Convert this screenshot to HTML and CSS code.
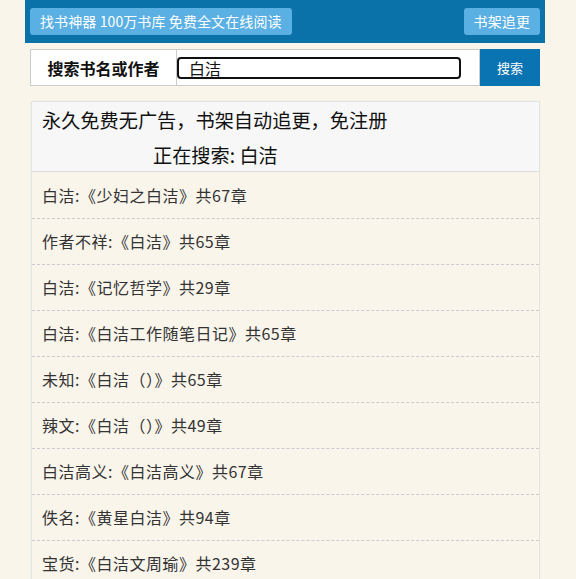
FILE: index.html
```html
<!DOCTYPE html>
<html lang="zh-CN">
  <head>
    <meta charset="UTF-8" />
    <meta name="viewport" content="width=device-width, initial-scale=1.0" />
    <title>白洁 - 找书神器</title>
    <link rel="stylesheet" href="styles.css">
  </head>
  <body>
    <div class="wrap">
      <div class="topbar">
        <a class="top-btn" href="#">找书神器 100万书库 免费全文在线阅读</a>
        <a class="top-btn" href="#">书架追更</a>
      </div>
      <form class="search-row" onsubmit="return false">
        <div class="search-label">搜索书名或作者</div>
        <div class="search-field"><input class="search-input" type="text" value="白洁" /></div>
        <button class="search-btn" type="submit">搜索</button>
      </form>
      <div class="card">
        <div class="card-head">
          <div class="slogan">永久免费无广告，书架自动追更，免注册</div>
          <div class="searching">正在搜索: 白洁</div>
        </div>
        <ul class="result-list" id="results"></ul>
      </div>
    </div>

    <script>
      const results = [
        { author: "白洁", title: "少妇之白洁", chapters: 67 },
        { author: "作者不祥", title: "白洁", chapters: 65 },
        { author: "白洁", title: "记忆哲学", chapters: 29 },
        { author: "白洁", title: "白洁工作随笔日记", chapters: 65 },
        { author: "未知", title: "白洁（）", chapters: 65 },
        { author: "辣文", title: "白洁（）", chapters: 49 },
        { author: "白洁高义", title: "白洁高义", chapters: 67 },
        { author: "佚名", title: "黄星白洁", chapters: 94 },
        { author: "宝货", title: "白洁文周瑜", chapters: 239 },
      ];

      document.getElementById("results").innerHTML = results
        .map(
          (r) => `<li class="result"><a href="#">${r.author}:《${r.title}》共${r.chapters}章</a></li>`
        )
        .join("");
    </script>
  </body>
</html>
```

FILE: styles.css
```css
body {
  font-family: "Noto Sans CJK SC", "Noto Sans", sans-serif;
  background-color: #f9f5eb;
  margin: 0;
  padding: 0;
  color: #333;
}
a {
  text-decoration: none;
}
.wrap {
  width: 520px;
  margin-left: 25px;
}
.topbar {
  background: #0a72a8;
  height: 43px;
  padding: 0 5px;
  display: flex;
  justify-content: space-between;
  align-items: center;
  box-sizing: border-box;
}
.top-btn {
  background: #5aafe3;
  color: white;
  font-size: 14px;
  letter-spacing: 0.1px;
  height: 27px;
  line-height: 27px;
  padding: 0 10px;
  border-radius: 3px;
}
.search-row {
  display: flex;
  margin: 6px 5px 0;
  height: 37px;
}
.search-label {
  width: 147px;
  box-sizing: border-box;
  border: 1px solid #ccc;
  background: white;
  font-size: 16px;
  font-weight: bold;
  color: #111;
  display: flex;
  align-items: center;
  justify-content: center;
}
.search-field {
  flex: 1;
  border: 1px solid #ccc;
  border-left: none;
  background: white;
  display: flex;
  align-items: center;
}
.search-input {
  width: 284px;
  height: 22px;
  box-sizing: border-box;
  border: 2px solid #111;
  border-radius: 4px;
  padding: 0 10px;
  font-family: inherit;
  font-size: 16px;
  color: #111;
  outline: none;
}
.search-btn {
  width: 60px;
  border: none;
  background: #0a73b1;
  color: white;
  font-family: inherit;
  font-size: 13px;
  cursor: pointer;
}
.card {
  margin: 15px 5px 0 6px;
  border: 1px solid #e4e4e4;
  border-bottom: none;
  box-shadow: 0 0 2px rgba(0, 0, 0, 0.05);
}
.card-head {
  background: #f7f7f7;
  border-bottom: 1px solid #ddd;
  padding: 0 10px;
  height: 70px;
  box-sizing: border-box;
  font-size: 19.2px;
  color: #111;
}
.slogan {
  line-height: 36px;
}
.searching {
  line-height: 36px;
  margin-top: -1px;
  padding-left: 111px;
}
.result-list {
  list-style: none;
  margin: 0;
  padding: 0;
}
.result {
  height: 45px;
  line-height: 45px;
  padding: 0 10px;
  border-bottom: 1px dashed #ccc;
  font-size: 16px;
  letter-spacing: 0.5px;
}
.result:first-child {
  height: 46px;
  line-height: 46px;
}
.result a {
  color: #333;
}
```
